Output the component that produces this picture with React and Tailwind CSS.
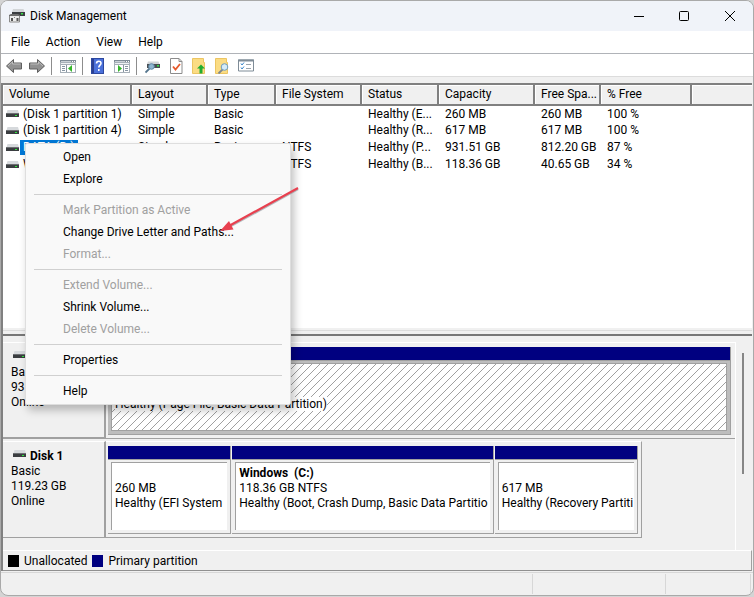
import React from 'react';
import clsx from 'clsx';

const columns = [
    { label: 'Volume', width: 'w-[128px]' },
    { label: 'Layout', width: 'w-[76px]' },
    { label: 'Type', width: 'w-[68px]' },
    { label: 'File System', width: 'w-[86px]' },
    { label: 'Status', width: 'w-[77px]' },
    { label: 'Capacity', width: 'w-[96px]' },
    { label: 'Free Spa...', width: 'w-[66px]' },
    { label: '% Free', width: 'w-[91px]' },
];

const volumes = [
    { name: '(Disk 1 partition 1)', layout: 'Simple', type: 'Basic', fs: '', status: 'Healthy (E...', capacity: '260 MB', free: '260 MB', percent: '100 %' },
    { name: '(Disk 1 partition 4)', layout: 'Simple', type: 'Basic', fs: '', status: 'Healthy (R...', capacity: '617 MB', free: '617 MB', percent: '100 %' },
    { name: 'DATA (D:)', layout: 'Simple', type: 'Basic', fs: 'NTFS', status: 'Healthy (P...', capacity: '931.51 GB', free: '812.20 GB', percent: '87 %', selected: true },
    { name: 'Windows (C:)', layout: 'Simple', type: 'Basic', fs: 'NTFS', status: 'Healthy (B...', capacity: '118.36 GB', free: '40.65 GB', percent: '34 %' },
];

const menuGroups = [
    [{ label: 'Open' }, { label: 'Explore' }],
    [{ label: 'Mark Partition as Active', disabled: true }, { label: 'Change Drive Letter and Paths...' }, { label: 'Format...', disabled: true }],
    [{ label: 'Extend Volume...', disabled: true }, { label: 'Shrink Volume...' }, { label: 'Delete Volume...', disabled: true }],
    [{ label: 'Properties' }],
    [{ label: 'Help' }],
];

const DriveIcon = () => (
    <svg width="14" height="8" viewBox="0 0 14 8" className="shrink-0" aria-hidden="true">
        <path d="M1.500 0h10.500l1 3.500H.500z" fill="#d6d9dc" />
        <rect x="0" y="3" width="13" height="4" fill="#3a3d40" />
        <rect x="0" y="3" width="13" height="1" fill="#6b6e71" />
        <rect x="9" y="5" width="2" height="1" fill="#2ee83c" />
    </svg>
);

const AppIcon = () => (
    <svg width="16" height="16" viewBox="0 0 16 16" aria-hidden="true">
        <path d="M4 1h10.500l1 3H3z" fill="#d2d5d8" />
        <rect x="3" y="4" width="13" height="4" fill="#3b3e41" />
        <rect x="12" y="5" width="2" height="1.500" fill="#35e045" />
        <path d="M.500 7.500h10v6.500H.500z" fill="#ededed" stroke="#8a8a8a" />
        <path d="M0 7l2-1h7l2 1v1H0z" fill="#6d6d6d" />
        <rect x="2" y="10" width="2" height="3" fill="#555" />
        <rect x="5" y="9" width="1" height="1" fill="#888" />
        <rect x="7.500" y="10" width="2" height="3" fill="#555" />
    </svg>
);

const BackIcon = () => (
    <svg width="16" height="16" viewBox="0 0 16 16" aria-hidden="true">
        <path d="M.500 8L7.500 1.500V5h8v6h-8v3.500z" fill="#919191" stroke="#5f5f5f" />
        <path d="M2 8l4.500-4.200V6h8" fill="none" stroke="#bdbdbd" />
    </svg>
);

const ForwardIcon = () => (
    <svg width="16" height="16" viewBox="0 0 16 16" aria-hidden="true">
        <path d="M15.500 8l-7-6.500V5h-8v6h8v3.500z" fill="#919191" stroke="#5f5f5f" />
        <path d="M1.500 6h8V3.800L14 8" fill="none" stroke="#bdbdbd" />
    </svg>
);

const PaneIcon = ({ flipped }) => (
    <svg width="16" height="16" viewBox="0 0 16 16" shapeRendering="crispEdges" aria-hidden="true">
        <rect x="0" y="2" width="16" height="13" fill="#a7b0b8" />
        <rect x="0" y="2" width="16" height="2" fill="#7f8b96" />
        <rect x="1" y="3" width="10" height="1" fill="#c9d0d6" />
        <rect x="12" y="3" width="1" height="1" fill="#fff" />
        <rect x="14" y="3" width="1" height="1" fill="#fff" />
        <rect x="1" y="5" width="14" height="1" fill="#eef1f3" />
        <rect x="1" y="7" width="14" height="7" fill="#fff" />
        {flipped ? (
            <g>
                <path d="M9 7h1v7H9zM11 8h3v1h-3zM11 10h3v1h-3zM11 12h3v1h-3z" fill="#8795a2" />
                <path d="M4 7v7l4-3.500z" fill="#35b52b" shapeRendering="auto" />
            </g>
        ) : (
            <g>
                <path d="M6 7h1v7H6zM2 8h3v1H2zM2 10h3v1H2zM2 12h3v1H2z" fill="#8795a2" />
                <path d="M12 7v7l-4-3.500z" fill="#35b52b" shapeRendering="auto" />
            </g>
        )}
    </svg>
);

const HelpIcon = () => (
    <svg width="14" height="16" viewBox="0 0 14 16" aria-hidden="true">
        <rect x=".5" y=".5" width="12" height="15" fill="#4a70da" stroke="#2d489f" />
        <rect x="1" y="1" width="2" height="14" fill="#2a3f92" />
        <path d="M5.500 5.500c0-3 4.500-3 4.500-.3 0 2-2.200 2-2.200 4.300M7.800 11v2" fill="none" stroke="#fff" strokeWidth="1.600" />
    </svg>
);

const RescanIcon = () => (
    <svg width="16" height="16" viewBox="0 0 16 16" aria-hidden="true">
        <path d="M3 3.500h10.500l1 2.500H2z" fill="#d2d5d8" />
        <rect x="2" y="6" width="13" height="4" fill="#4a4e52" />
        <rect x="12" y="7" width="2" height="1.500" fill="#35e045" />
        <path d="M.500 14.500l4-4" stroke="#54758d" strokeWidth="1.800" />
        <circle cx="6.500" cy="8.500" r="2.800" fill="#8fb6d0" stroke="#5c87a6" />
    </svg>
);

const CheckIcon = () => (
    <svg width="13" height="16" viewBox="0 0 13 16" aria-hidden="true">
        <path d="M.500.500h8.500l3 3v12H.500z" fill="#fff" stroke="#8c8c8c" />
        <path d="M9 .500v3h3" fill="none" stroke="#8c8c8c" />
        <path d="M3 8.500l2.500 3L10 6" fill="none" stroke="#e65a2c" strokeWidth="1.800" />
    </svg>
);

const FolderUpIcon = () => (
    <svg width="14" height="16" viewBox="0 0 14 16" aria-hidden="true">
        <path d="M.500.500h11v4h1v11H.500z" fill="#fbdc83" stroke="#ecc562" />
        <path d="M9 6.500l4 4h-2.500v5h-3v-5H5z" fill="#22ad30" />
    </svg>
);

const FolderSearchIcon = () => (
    <svg width="14" height="16" viewBox="0 0 14 16" aria-hidden="true">
        <path d="M.500.500h11v4h1v11H.500z" fill="#fbdc83" stroke="#ecc562" />
        <path d="M3.500 15.500l4-4" stroke="#7d8790" strokeWidth="1.800" />
        <circle cx="9.500" cy="9" r="3.300" fill="#d5ebf8" stroke="#6d9cbd" />
    </svg>
);

const ListIcon = () => (
    <svg width="16" height="13" viewBox="0 0 16 13" aria-hidden="true">
        <path d="M.500 1h15v11H.500z" fill="#fff" stroke="#7f8c97" />
        <path d="M0 1.500h16" stroke="#7f8c97" strokeWidth="2" />
        <path d="M3 4.500l1 1.500 2-2.500M3 8.500l1 1.500 2-2.500" fill="none" stroke="#3583c9" />
        <path d="M8 5.500h5M8 9.500h5" stroke="#9aa4ad" />
    </svg>
);

const ToolButton = ({ label, children }) => (
    <button type="button" aria-label={label} className="flex h-5 shrink-0 items-center">{children}</button>
);

const ToolDivider = () => <span className="mr-[2px] h-[18px] w-px bg-[#8d8d8d]" />;

const TitleBar = () => (
    <header className="flex h-[30px] items-center justify-between bg-[#f0f3f9] pl-2">
        <div className="flex items-center gap-[5px]">
            <AppIcon />
            <h1>Disk Management</h1>
        </div>
        <div className="flex">
            <button type="button" aria-label="Minimize" className="flex h-[30px] w-[45px] items-center justify-center">
                <svg width="10" height="10" viewBox="0 0 10 10"><path d="M0 5.500h10" stroke="#000" /></svg>
            </button>
            <button type="button" aria-label="Maximize" className="flex h-[30px] w-[45px] items-center justify-center">
                <svg width="10" height="10" viewBox="0 0 10 10"><rect x=".5" y=".5" width="9" height="9" rx="1" fill="none" stroke="#000" /></svg>
            </button>
            <button type="button" aria-label="Close" className="flex h-[30px] w-[47px] items-center justify-center">
                <svg width="10" height="10" viewBox="0 0 10 10"><path d="M0 0l10 10M10 0L0 10" stroke="#000" /></svg>
            </button>
        </div>
    </header>
);

const Toolbar = () => (
    <div className="flex h-[23px] items-center gap-[6px] border-b border-[#dcdcdc] bg-white pl-[5px] pt-px">
        <div className="flex gap-[7px]">
            <ToolButton label="Back"><BackIcon /></ToolButton>
            <ToolButton label="Forward"><ForwardIcon /></ToolButton>
        </div>
        <ToolDivider />
        <ToolButton label="Show console tree"><PaneIcon /></ToolButton>
        <ToolDivider />
        <div className="flex gap-[9px]">
            <ToolButton label="Help"><HelpIcon /></ToolButton>
            <ToolButton label="Show action pane"><PaneIcon flipped /></ToolButton>
        </div>
        <ToolDivider />
        <div className="flex gap-[9px]">
            <ToolButton label="Rescan disks"><RescanIcon /></ToolButton>
            <ToolButton label="Check"><CheckIcon /></ToolButton>
            <ToolButton label="Open folder"><FolderUpIcon /></ToolButton>
            <ToolButton label="Explore folder"><FolderSearchIcon /></ToolButton>
            <ToolButton label="Options"><ListIcon /></ToolButton>
        </div>
    </div>
);

const VolumeTable = () => (
    <table className="w-full table-fixed border-collapse">
        <thead>
            <tr className="h-5">
                {columns.map((col) => (
                    <th key={col.label} className={clsx('border-r-2 border-b-2 border-[#808080] bg-[#f0f0f0] p-0 pl-[6px] text-left font-normal whitespace-nowrap shadow-[inset_1px_1px_0_#ffffff]', col.width)}>
                        {col.label}
                    </th>
                ))}
                <th aria-label="Empty" className="border-b-2 border-[#808080] bg-[#f0f0f0] p-0 shadow-[inset_1px_1px_0_#ffffff]" />
            </tr>
        </thead>
        <tbody>
            {volumes.map((v) => (
                <tr key={v.name} className="h-[17px] whitespace-nowrap">
                    <td className="p-0">
                        <div className="flex items-center pl-[3px]">
                            <DriveIcon />
                            <span className={clsx('pr-1 pl-[3px]', v.selected && 'bg-[#0078d7] text-white')}>{v.name}</span>
                        </div>
                    </td>
                    <td className="p-0 pl-[7px]">{v.layout}</td>
                    <td className="p-0 pl-[7px]">{v.type}</td>
                    <td className="p-0 pl-[7px]">{v.fs}</td>
                    <td className="p-0 pl-[7px]">{v.status}</td>
                    <td className="p-0 pl-[7px]">{v.capacity}</td>
                    <td className="p-0 pl-[7px]">{v.free}</td>
                    <td className="p-0 pl-[7px]">{v.percent}</td>
                    <td className="p-0" />
                </tr>
            ))}
        </tbody>
    </table>
);

const DiskLabel = ({ name, size }) => (
    <div className="w-[103px] shrink-0 border-t border-r-2 border-b border-t-white border-r-[#a0a0a0] border-b-[#a0a0a0] pt-[7px] pl-2">
        <h2 className="flex gap-[3px] pl-[2px] font-bold"><span className="pt-px"><DriveIcon /></span>{name}</h2>
        <p>Basic</p>
        <p>{size}</p>
        <p>Online</p>
    </div>
);

const Hatch = () => (
    <svg className="absolute inset-0 h-full w-full" aria-hidden="true">
        <defs>
            <pattern id="hatch" width="8" height="8" patternUnits="userSpaceOnUse">
                <path d="M7 0h1v1H7zM6 1h1v1H6zM5 2h1v1H5zM4 3h1v1H4zM3 4h1v1H3zM2 5h1v1H2zM1 6h1v1H1zM0 7h1v1H0z" fill="#a0a0a0" shapeRendering="crispEdges" />
            </pattern>
        </defs>
        <rect width="100%" height="100%" fill="url(#hatch)" />
    </svg>
);

const Partition = ({ title, size, status, selected }) => (
    <div className="mr-px flex min-w-0 flex-col border-r border-b border-[#a0a0a0]">
        <div className="h-[13px] bg-[#000080]" />
        <div className={clsx('flex-1 border-t border-[#a0a0a0] px-[3px] pt-[2px] pb-[3px]', selected ? 'bg-[#bdbdbd]' : 'bg-[#f0f0f0]')}>
            <div className={clsx('relative h-[68px] border-t border-l border-[#a0a0a0] bg-white py-[3px] pl-[3px]', selected && 'border-r border-b')}>
                {selected && <Hatch />}
                <div className="relative whitespace-pre">
                    <p className="h-[15px] font-bold">{title}</p>
                    <p>{size}</p>
                    <p><span className={clsx(selected && 'bg-white')}>{status}</span></p>
                </div>
            </div>
        </div>
    </div>
);

const DiskPane = () => (
    <section className="flex bg-[#f0f0f0] pt-[6px]">
        <div className="min-w-0 flex-1">
            <div className="flex h-[97px] border-b border-[#a0a0a0]">
                <DiskLabel name="Disk 0" size="931.51 GB" />
                <div className="min-w-0 flex-1 border-t border-white pt-1 pr-[3px] pl-[2px]">
                    <Partition title="DATA  (D:)" size="931.51 GB NTFS" status="Healthy (Page File, Basic Data Partition)" selected />
                </div>
            </div>
            <div className="flex h-[99px] pt-[2px]">
                <DiskLabel name="Disk 1" size="119.23 GB" />
                <div className="mr-[93px] grid min-w-0 flex-1 grid-cols-[124fr_262fr_144fr] border-t border-r border-b border-t-white border-r-[#a0a0a0] border-b-[#a0a0a0] pt-1 pr-[2px] pb-1 pl-[2px]">
                    <Partition size="260 MB" status="Healthy (EFI System" />
                    <Partition title="Windows  (C:)" size="118.36 GB NTFS" status="Healthy (Boot, Crash Dump, Basic Data Partitio" />
                    <Partition size="617 MB" status="Healthy (Recovery Partiti" />
                </div>
            </div>
            <div className="h-3" />
        </div>
        <div className="w-[17px] shrink-0 border-l border-white pt-[11px] pl-[6px]">
            <div className="h-[121px] w-[2px] bg-[#868686]" />
        </div>
    </section>
);

const ContextMenu = () => (
    <div role="menu" className="absolute top-[142px] left-[24px] w-[266px] rounded-[2px] border border-[#dedede] bg-[#f9f9f9] py-[2px] shadow-[3px_5px_8px_rgba(0,0,0,0.25)]">
        {menuGroups.map((group, i) => (
            <div key={i} className={clsx('flex flex-col', i > 0 && 'before:mx-2 before:my-1 before:h-px before:bg-[#d0d0d0]')}>
                {group.map((item) => (
                    <button key={item.label} type="button" role="menuitem" disabled={item.disabled} className={clsx('h-[22px] pl-[37px] text-left', item.disabled && 'text-[#a0a0a0]')}>
                        {item.label}
                    </button>
                ))}
            </div>
        ))}
    </div>
);

const Arrow = () => (
    <svg className="pointer-events-none absolute top-[183px] left-[215px]" width="86" height="52" viewBox="0 0 86 52" aria-hidden="true">
        <path d="M82 5L12 43.500" stroke="#8a8f96" strokeWidth="2.500" opacity=".6" />
        <path d="M82 4L12 42.500" stroke="#e8404f" strokeWidth="2.200" />
        <path d="M4 47l9-10 4.500 8.500z" fill="#e8404f" />
    </svg>
);

const App = () => {
    return (
        <div className="min-h-screen bg-[#d4d4d4] pb-px">
            <div className="relative flex min-h-[596px] flex-col overflow-hidden rounded-[8px] border border-[#a9a9a9] bg-[#f0f0f0] font-['Roboto','Noto_Sans',sans-serif] text-[12px] leading-[15px] text-black">
                <TitleBar />
                <nav className="flex h-[23px] items-center gap-4 border-b border-[#b0b3b8] bg-white pl-[10px]">
                    <button type="button">File</button>
                    <button type="button">Action</button>
                    <button type="button">View</button>
                    <button type="button">Help</button>
                </nav>
                <Toolbar />
                <main className="mt-[6px] mr-px flex flex-1 flex-col border-l-2 border-[#808080]">
                    <section className="flex-1 border-t-2 border-[#808080] bg-white">
                        <VolumeTable />
                    </section>
                    <div className="h-2 border-t-2 border-b-2 border-t-[#f0f0f0] border-b-[#777] bg-[#f0f0f0]">
                        <div className="h-px bg-[#dcdcdc]" />
                    </div>
                    <DiskPane />
                    <div className="flex h-[21px] items-center gap-[5px] border-t border-r border-b border-t-white border-r-[#a0a0a0] border-b-[#909090] pt-px pl-[5px]">
                        <span className="h-3 w-[11px] bg-black" />
                        <span>Unallocated</span>
                        <span className="h-3 w-[11px] bg-[#000080]" />
                        <span>Primary partition</span>
                    </div>
                </main>
                <footer className="mt-px flex h-[23px] border-t border-[#d7d7d7] py-px">
                    <div className="flex-1 border-r border-[#d7d7d7]" />
                    <div className="w-[133px] border-r border-[#d7d7d7]" />
                    <div className="mr-[2px] w-[85px] border-r border-[#d7d7d7]" />
                </footer>
                <ContextMenu />
                <Arrow />
            </div>
        </div>
    );
};

export default App;
